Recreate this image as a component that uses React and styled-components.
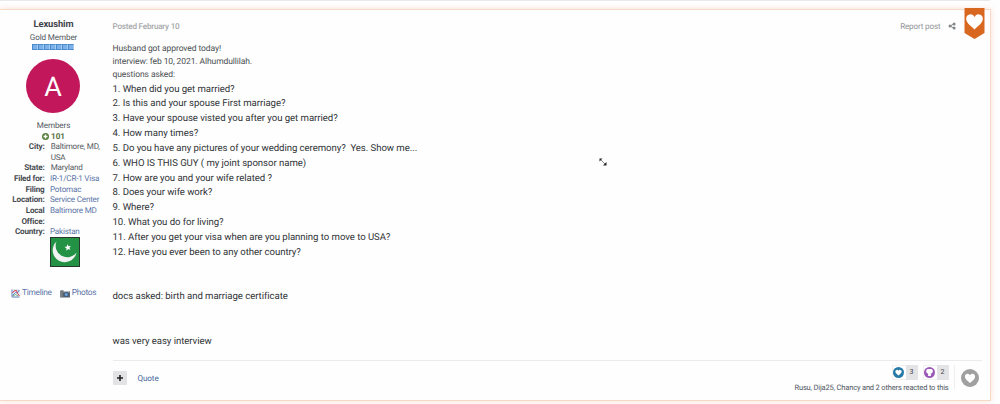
import React from "react";
import styled, { createGlobalStyle } from "styled-components";

const GlobalStyle = createGlobalStyle`
  * {
    box-sizing: border-box;
  }
  body {
    margin: 0;
    height: 404px;
    overflow: hidden;
    background: #fefefe;
    font-family: Roboto, "Liberation Sans", sans-serif;
    font-size: 8.1px;
    letter-spacing: -0.12px;
    color: #4f5256;
    text-rendering: geometricPrecision;
  }
`;

const Page = styled.div`
  height: 404px;
`;

const TopLine = styled.div`
  width: 990px;
  height: 1px;
  margin-bottom: 8px;
  background: #e9e9eb;
`;

const Post = styled.article`
  position: relative;
  display: flex;
  width: 991px;
  height: 392px;
  border: 1px solid #f8d8c6;
  border-left: none;
  box-shadow: 0 0 6px rgba(225, 105, 40, 0.2);
  background: #fefefe;
`;

const Author = styled.aside`
  display: flex;
  flex-direction: column;
  width: 112.5px;
  padding-top: 8px;
`;

const AuthorLine = styled.div`
  width: 107px;
  height: ${(props) => props.$height || 11}px;
  line-height: ${(props) => props.$height || 11}px;
  text-align: center;
  font-size: ${(props) => props.$size || 8.1}px;
  font-weight: ${(props) => (props.$bold ? 700 : 400)};
  color: ${(props) => props.$color || "#50565c"};
`;

const Pips = styled.div`
  display: flex;
  justify-content: center;
  width: 106px;
  margin-top: 2px;
`;

const Pip = styled.span`
  width: 6px;
  height: 6px;
  border: 1px solid #4a8bd0;
  border-right-color: #a9cbee;
  background: #7db1ea;
`;

const Avatar = styled.div`
  width: 54px;
  height: 54px;
  margin: 9px 0 7px 26px;
  border-radius: 50%;
  background: #c2185b;
  color: #fff;
  font-size: 27px;
  line-height: 57px;
  text-align: center;
`;

const Reputation = styled(AuthorLine)`
  display: flex;
  align-items: center;
  justify-content: center;
  gap: 2px;
  letter-spacing: 0;
`;

const Fields = styled.dl`
  display: grid;
  grid-template-columns: 44.5px 60px;
  column-gap: 5.5px;
  margin: 0;
  line-height: 10.67px;
`;

const Label = styled.dt`
  text-align: right;
  font-weight: 700;
  letter-spacing: -0.18px;
  color: #484c52;
`;

const Value = styled.dd`
  margin: 0;
  padding-left: ${(props) => (props.$link ? 0 : 0.7)}px;
  white-space: nowrap;
  letter-spacing: -0.2px;
  color: ${(props) => (props.$link ? "#5b74a8" : "#555a5e")};
`;

const Flag = styled.svg`
  display: block;
  margin: -0.5px 0 0 50px;
`;

const AuthorLinks = styled.div`
  display: flex;
  gap: 8px;
  margin: 21.5px 0 0 11px;
  font-size: 8.3px;
  line-height: 11px;
  letter-spacing: -0.25px;
  color: #5b74a8;
`;

const AuthorLink = styled.span`
  display: flex;
  align-items: center;
  gap: 2px;
`;

const Main = styled.div`
  display: flex;
  flex-direction: column;
  width: 869px;
`;

const Meta = styled.header`
  display: flex;
  align-items: flex-start;
  justify-content: space-between;
  height: 32.5px;
  padding: 11px 26px 0 0;
  line-height: 10px;
  color: #a5a7a9;
`;

const Posted = styled.span`
  font-weight: 500;
  letter-spacing: -0.2px;
`;

const Report = styled.span`
  display: flex;
  align-items: center;
  gap: 7px;
  color: #919497;
  letter-spacing: -0.15px;
`;

const Content = styled.div`
  height: 317.5px;
  color: #303336;
`;

const Intro = styled.p`
  margin: 0 0 1px;
  font-size: 8.5px;
  line-height: 13px;
  letter-spacing: -0.09px;
  color: #4b4e52;
`;

const Line = styled.p`
  margin: 0;
  height: 14.85px;
  font-size: 9.6px;
  line-height: 14.85px;
  letter-spacing: -0.05px;
  white-space: pre;
`;

const Footer = styled.footer`
  display: flex;
  justify-content: space-between;
  height: 40px;
  border-top: 1px solid #ebebed;
`;

const Controls = styled.div`
  display: flex;
  gap: 11px;
  padding-top: 10px;
  line-height: 14px;
  letter-spacing: -0.1px;
  color: #46669c;
`;

const MultiQuote = styled.span`
  display: flex;
  align-items: center;
  justify-content: center;
  width: 14px;
  height: 14px;
  border-radius: 1px;
  background: #e3e3e5;
`;

const Reactions = styled.div`
  display: flex;
  padding: 4px 3px 0 0;
`;

const ReactionInfo = styled.div`
  display: flex;
  flex-direction: column;
  align-items: flex-end;
  margin-right: 6px;
`;

const Counts = styled.div`
  display: flex;
  gap: 5px;
  margin-right: -1px;
`;

const Count = styled.span`
  display: flex;
  align-items: center;
  height: 15px;
  border: 1px solid #f0f0f1;
  border-right: none;
  background: #fff;

  b {
    width: 12px;
    height: 15px;
    margin-left: 2px;
    background: #e4e4e6;
    font-size: 7px;
    font-weight: 400;
    line-height: 15px;
    text-align: center;
    color: #3e4146;
  }
`;

const Reacted = styled.div`
  margin: 0.5px -1px 0 0;
  font-size: 7.5px;
  line-height: 13px;
  letter-spacing: -0.17px;
  color: #4f5663;
`;

const LikeButton = styled.div`
  height: 24px;
  padding: 4px 0 0 6px;
  border-left: 1px solid #eeeeef;
`;

const Ribbon = styled.svg`
  position: absolute;
  top: -2px;
  right: 5px;
`;

const Pointer = styled.svg`
  position: absolute;
  top: 148px;
  left: 599px;
`;

const HEART =
  "M12 21C5 15 2 12.200 2 8.200A5.200 5.200 0 0 1 12 6A5.200 5.200 0 0 1 22 8.200C22 12.200 19 15 12 21Z";

const questions = [
  "1. When did you get married?",
  "2. Is this and your spouse First marriage?",
  "3. Have your spouse visted you after you get married?",
  "4. How many times?",
  "5. Do you have any pictures of your wedding ceremony?  Yes. Show me...",
  "6. WHO IS THIS GUY ( my joint sponsor name)",
  "7. How are you and your wife related ?",
  "8. Does your wife work?",
  "9. Where?",
  "10. What you do for living?",
  "11. After you get your visa when are you planning to move to USA?",
  "12. Have you ever been to any other country?",
  "",
  "",
  "docs asked: birth and marriage certificate",
  "",
  "",
  "was very easy interview",
];

const PlusCircle = () => (
  <svg width="7" height="7" viewBox="0 0 14 14">
    <circle cx="7" cy="7" r="7" fill="#57803b" />
    <path d="M7 3V11M3 7H11" stroke="#fff" strokeWidth="2.800" />
  </svg>
);

const TimelineIcon = () => (
  <svg width="9" height="9" viewBox="0 0 18 18">
    <path d="M2 1V16H17" fill="none" stroke="#5577b5" strokeWidth="2" />
    <path d="M3 2H16V15H3Z" fill="#edf2fa" stroke="#93a9cf" />
    <path d="M3 13L9 7L12 8L17 2" fill="none" stroke="#4a7ac6" strokeWidth="1.800" />
    <path d="M3 8L6 4L11 3L13 9L17 14" fill="none" stroke="#cf3c45" strokeWidth="2" />
    <path d="M4 14L9 11L14 14" fill="none" stroke="#4e9956" strokeWidth="1.500" />
  </svg>
);

const CameraIcon = () => (
  <svg width="10" height="8" viewBox="0 0 20 16">
    <rect y="2" width="20" height="13" rx="1" fill="#5d646b" />
    <rect x="1" width="6" height="3" fill="#8d949b" />
    <rect x="7" y="2" width="12" height="3" fill="#b4bbc2" />
    <rect y="3" width="5" height="11" fill="#7b8289" />
    <circle cx="12.500" cy="9" r="5" fill="#3f5a7c" />
    <circle cx="12.500" cy="9" r="3" fill="#6fa3da" />
  </svg>
);

const ShareIcon = () => (
  <svg width="8" height="8" viewBox="0 0 16 16" fill="#85888b">
    <path d="M12.500 3.500L4 8L12.500 12.500" fill="none" stroke="#85888b" strokeWidth="2" />
    <circle cx="12.300" cy="3.800" r="3" />
    <circle cx="4" cy="8" r="3" />
    <circle cx="12.300" cy="12.200" r="3" />
  </svg>
);

const HeartBadge = ({ size, color, scale = 0.68 }) => (
  <svg width={size} height={size} viewBox="0 0 24 24">
    <circle cx="12" cy="12" r="12" fill={color} />
    <path
      d={HEART}
      fill="#fff"
      transform={`translate(12 12.500) scale(${scale}) translate(-12 -12)`}
    />
  </svg>
);

const ThanksBadge = () => (
  <svg width="11" height="11" viewBox="0 0 24 24">
    <circle cx="12" cy="12" r="12" fill="#9b59b6" />
    <path
      d="M8 4.500H16L19 6.500V11.500L16.500 14H15V19.500H9V14H7.500L5 11.500V6.500Z"
      fill="#fff"
    />
  </svg>
);

const App = () => {
  return (
    <Page>
      <GlobalStyle />
      <TopLine />
      <Post>
        <Author>
          <AuthorLine $height={14} $size={9.4} $bold $color="#3f444b">
            Lexushim
          </AuthorLine>
          <AuthorLine $height={10}>Gold Member</AuthorLine>
          <Pips>
            {[...Array(7)].map((_, i) => (
              <Pip key={i} />
            ))}
          </Pips>
          <Avatar>A</Avatar>
          <AuthorLine>Members</AuthorLine>
          <Reputation $height={10} $bold $color="#57713f">
            <PlusCircle />
            101
          </Reputation>
          <Fields>
            <Label>City:</Label>
            <Value>
              Baltimore, MD,
              <br />
              USA
            </Value>
            <Label>State:</Label>
            <Value>Maryland</Value>
            <Label>Filed for:</Label>
            <Value $link>IR-1/CR-1 Visa</Value>
            <Label>
              Filing
              <br />
              Location:
            </Label>
            <Value $link>
              Potomac
              <br />
              Service Center
            </Value>
            <Label>
              Local
              <br />
              Office:
            </Label>
            <Value $link>Baltimore MD</Value>
            <Label>Country:</Label>
            <Value $link>Pakistan</Value>
          </Fields>
          <Flag width="30" height="30" viewBox="0 0 30 30">
            <rect x="0.500" y="0.500" width="29" height="29" fill="#249245" stroke="#28352c" />
            <path
              d="M6.500 4.500A12 12 0 1 0 26.500 15.500A11.500 11.500 0 0 1 6.500 4.500Z"
              fill="#f0f3f1"
            />
            <path
              d="M17.500 7L18.500 9.300L21 9L19.300 10.800L20.500 13L18.200 12L16.300 13.700L16.500 11.200L14.500 10L16.900 9.400Z"
              fill="#fff"
            />
          </Flag>
          <AuthorLinks>
            <AuthorLink>
              <TimelineIcon />
              Timeline
            </AuthorLink>
            <AuthorLink>
              <CameraIcon />
              Photos
            </AuthorLink>
          </AuthorLinks>
        </Author>
        <Main>
          <Meta>
            <Posted>Posted February 10</Posted>
            <Report>
              Report post
              <ShareIcon />
            </Report>
          </Meta>
          <Content>
            <Intro>
              Husband got approved today!
              <br />
              interview: feb 10, 2021. Alhumdullilah.
              <br />
              questions asked:
            </Intro>
            {questions.map((text, i) => (
              <Line key={i}>{text}</Line>
            ))}
          </Content>
          <Footer>
            <Controls>
              <MultiQuote>
                <svg width="6" height="6" viewBox="0 0 6 6">
                  <path d="M3 0V6M0 3H6" stroke="#222" strokeWidth="1.600" />
                </svg>
              </MultiQuote>
              Quote
            </Controls>
            <Reactions>
              <ReactionInfo>
                <Counts>
                  <Count>
                    <HeartBadge size={11} color="#2779a7" />
                    <b>3</b>
                  </Count>
                  <Count>
                    <ThanksBadge />
                    <b>2</b>
                  </Count>
                </Counts>
                <Reacted>Rusu, Dija25, Chancy and 2 others reacted to this</Reacted>
              </ReactionInfo>
              <LikeButton>
                <HeartBadge size={18} color="#a0a0a0" />
              </LikeButton>
            </Reactions>
          </Footer>
        </Main>
        <Ribbon width="21" height="32" viewBox="0 0 21 32">
          <path d="M0.500 0H20.500V25L10.500 31L0.500 25Z" fill="#d8681f" />
          <path
            d={HEART}
            fill="#fff"
            transform="translate(10.500 14) scale(0.83) translate(-12 -12)"
          />
        </Ribbon>
        <Pointer width="8" height="8" viewBox="0 0 8 8">
          <path d="M0.500 0.500H3.500L0.500 3.500ZM7.500 7.500H4L7.500 4Z" fill="#222" />
          <path d="M1.500 1.500L6.500 6.500" stroke="#333" strokeWidth="0.600" />
        </Pointer>
      </Post>
    </Page>
  );
};

export default App;
